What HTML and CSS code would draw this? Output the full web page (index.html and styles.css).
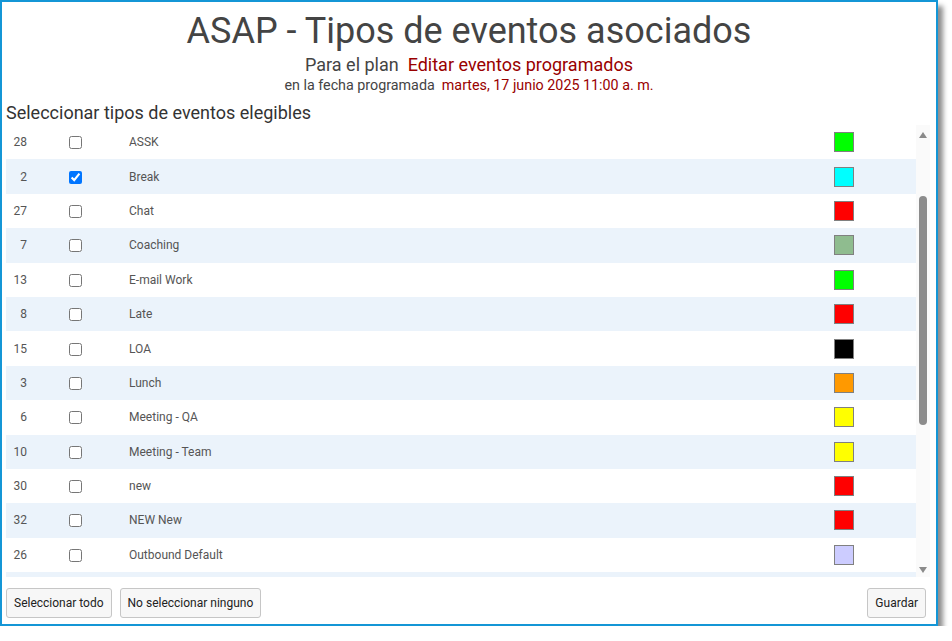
FILE: index.html
```html
<!DOCTYPE html>
<html lang="es">
<head>
<meta charset="utf-8">
<title>ASAP - Tipos de eventos asociados</title>
<link rel="stylesheet" href="styles.css">
</head>
<body>
<div class="window">
  <header class="head">
    <h1 class="title">ASAP - Tipos de eventos asociados</h1>
    <div class="sub">Para el plan&nbsp; <span class="red">Editar eventos programados</span></div>
    <div class="sub2">en la fecha programada&nbsp; <span class="red">martes, 17 junio 2025 11:00 a. m.</span></div>
  </header>
  <h2 class="section">Seleccionar tipos de eventos elegibles</h2>
  <div class="listwrap">
    <div class="list">
      <div class="row"><span class="num">28</span><span class="chk"><input type="checkbox"></span><span class="name">ASSK</span><span class="sw" style="background:#00ff00"></span></div>
      <div class="row alt"><span class="num">2</span><span class="chk"><input type="checkbox" checked></span><span class="name">Break</span><span class="sw" style="background:#00ffff"></span></div>
      <div class="row"><span class="num">27</span><span class="chk"><input type="checkbox"></span><span class="name">Chat</span><span class="sw" style="background:#ff0000"></span></div>
      <div class="row alt"><span class="num">7</span><span class="chk"><input type="checkbox"></span><span class="name">Coaching</span><span class="sw" style="background:#8fbc8f"></span></div>
      <div class="row"><span class="num">13</span><span class="chk"><input type="checkbox"></span><span class="name">E-mail Work</span><span class="sw" style="background:#00ff00"></span></div>
      <div class="row alt"><span class="num">8</span><span class="chk"><input type="checkbox"></span><span class="name">Late</span><span class="sw" style="background:#ff0000"></span></div>
      <div class="row"><span class="num">15</span><span class="chk"><input type="checkbox"></span><span class="name">LOA</span><span class="sw" style="background:#000000"></span></div>
      <div class="row alt"><span class="num">3</span><span class="chk"><input type="checkbox"></span><span class="name">Lunch</span><span class="sw" style="background:#ff9900"></span></div>
      <div class="row"><span class="num">6</span><span class="chk"><input type="checkbox"></span><span class="name">Meeting - QA</span><span class="sw" style="background:#ffff00"></span></div>
      <div class="row alt"><span class="num">10</span><span class="chk"><input type="checkbox"></span><span class="name">Meeting - Team</span><span class="sw" style="background:#ffff00"></span></div>
      <div class="row"><span class="num">30</span><span class="chk"><input type="checkbox"></span><span class="name">new</span><span class="sw" style="background:#ff0000"></span></div>
      <div class="row alt"><span class="num">32</span><span class="chk"><input type="checkbox"></span><span class="name">NEW New</span><span class="sw" style="background:#ff0000"></span></div>
      <div class="row"><span class="num">26</span><span class="chk"><input type="checkbox"></span><span class="name">Outbound Default</span><span class="sw" style="background:#ccccff"></span></div>
      <div class="row alt"><span class="num">31</span><span class="chk"><input type="checkbox"></span><span class="name">Personal</span><span class="sw" style="background:#ff00ff"></span></div>
    </div>
    <div class="scrollbar">
      <span class="arrow up"></span>
      <div class="track"><div class="thumb"></div></div>
      <span class="arrow down"></span>
    </div>
  </div>
  <footer class="actions">
    <button class="btn">Seleccionar todo</button>
    <button class="btn">No seleccionar ninguno</button>
    <span class="spacer"></span>
    <button class="btn">Guardar</button>
  </footer>
</div>
</body>
</html>
```
FILE: styles.css
```css
html, body {
  margin: 0;
  padding: 0;
  background: #ffffff;
}
body {
  font-family: Roboto, "Liberation Sans", Arial, sans-serif;
  color: #444;
}
.window {
  box-sizing: border-box;
  width: 938px;
  height: 626px;
  border: 2px solid #1496d6;
  background: #ffffff;
  box-shadow: 5px 6px 5px rgba(0, 0, 0, 0.45);
  display: flex;
  flex-direction: column;
}
.head {
  text-align: center;
  padding-top: 9px;
}
.title {
  margin: 0;
  font-size: 36px;
  line-height: 40px;
  font-weight: 400;
  color: #444;
}
.sub {
  margin-top: 4px;
  font-size: 18px;
  line-height: 20px;
  color: #444;
}
.sub2 {
  margin-top: 1px;
  font-size: 14.3px;
  line-height: 18px;
  color: #444;
}
.red {
  color: #990000;
}
.section {
  margin: 8px 0 0 4px;
  font-size: 18px;
  line-height: 22px;
  font-weight: 400;
  color: #333;
}
.listwrap {
  display: flex;
  margin: 1px 6px 0 4px;
  height: 452px;
}
.list {
  flex: 1;
  overflow: hidden;
}
.row {
  display: grid;
  grid-template-columns: 21px 102px 1fr 20px;
  align-items: center;
  height: 34.4px;
  padding-right: 62px;
  font-size: 12px;
  color: #555;
}
.row.alt {
  background: #ebf3fb;
}
.num {
  text-align: right;
}
.chk {
  display: flex;
  align-items: center;
  padding-top: 1px;
}
.chk input {
  margin: 0 0 0 42px;
  width: 13px;
  height: 13px;
}
.sw {
  box-sizing: border-box;
  width: 20px;
  height: 20px;
  border: 1px solid #808080;
}
.scrollbar {
  width: 14px;
  background: #fafafa;
  display: flex;
  flex-direction: column;
  align-items: center;
}
.arrow {
  width: 0;
  height: 0;
  border-left: 4.5px solid transparent;
  border-right: 4.5px solid transparent;
}
.arrow.up {
  margin-top: 7px;
  border-bottom: 6px solid #8a8a8a;
}
.arrow.down {
  margin-bottom: 4px;
  border-top: 6px solid #8a8a8a;
}
.track {
  flex: 1;
  width: 100%;
  display: flex;
  justify-content: center;
}
.thumb {
  width: 8px;
  height: 229px;
  margin-top: 58px;
  background: #8c8c8c;
  border-radius: 4px;
}
.actions {
  display: flex;
  gap: 8px;
  padding: 11px 10px 0 4px;
}
.spacer {
  flex: 1;
}
.btn {
  height: 30px;
  padding: 0 7px;
  font-family: Roboto, "Liberation Sans", Arial, sans-serif;
  font-size: 12px;
  color: #222;
  background: #f7f7f7;
  border: 1px solid #c6c6c6;
  border-radius: 3px;
}
```
